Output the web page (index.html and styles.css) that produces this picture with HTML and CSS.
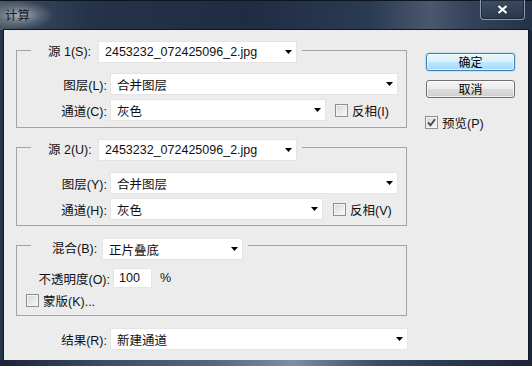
FILE: index.html
```html
<!DOCTYPE html>
<html lang="zh-CN">
<head>
<meta charset="utf-8">
<title>计算</title>
<link rel="stylesheet" href="styles.css">
</head>
<body>
<div class="window">
  <div class="titlebar">
    <span class="title">计算</span>
    <div class="close"><svg width="11" height="9" viewBox="0 0 11 9"><path d="M1.5 1 L9.5 8 M9.5 1 L1.5 8" stroke="#fff" stroke-width="2.2" fill="none"/></svg></div>
  </div>
  <div class="client">
    <div class="left">
      <fieldset class="group g1">
        <legend><div class="legend-in li1"><span class="llbl">源 1(S):</span><div class="combo w199"><span>2453232_072425096_2.jpg</span><svg class="arr" width="7" height="4" viewBox="0 0 7 4"><polygon points="0,0 7,0 3.5,4" fill="#000"/></svg></div></div></legend>
        <div class="row"><span class="lbl">图层(L):</span><div class="combo w288"><span>合并图层</span><svg class="arr" width="7" height="4" viewBox="0 0 7 4"><polygon points="0,0 7,0 3.5,4" fill="#000"/></svg></div></div>
        <div class="row"><span class="lbl">通道(C):</span><div class="combo w216"><span>灰色</span><svg class="arr" width="7" height="4" viewBox="0 0 7 4"><polygon points="0,0 7,0 3.5,4" fill="#000"/></svg></div><span class="cb cb-inv"></span><span class="cbtext">反相(I)</span></div>
      </fieldset>
      <fieldset class="group g2">
        <legend><div class="legend-in li2"><span class="llbl">源 2(U):</span><div class="combo w199"><span>2453232_072425096_2.jpg</span><svg class="arr" width="7" height="4" viewBox="0 0 7 4"><polygon points="0,0 7,0 3.5,4" fill="#000"/></svg></div></div></legend>
        <div class="row"><span class="lbl">图层(Y):</span><div class="combo w288"><span>合并图层</span><svg class="arr" width="7" height="4" viewBox="0 0 7 4"><polygon points="0,0 7,0 3.5,4" fill="#000"/></svg></div></div>
        <div class="row"><span class="lbl">通道(H):</span><div class="combo w213"><span>灰色</span><svg class="arr" width="7" height="4" viewBox="0 0 7 4"><polygon points="0,0 7,0 3.5,4" fill="#000"/></svg></div><span class="cb cb-inv2"></span><span class="cbtext">反相(V)</span></div>
      </fieldset>
      <fieldset class="group g3">
        <legend><div class="legend-in li3"><span class="llbl l3">混合(B):</span><div class="combo w141"><span>正片叠底</span><svg class="arr" width="7" height="4" viewBox="0 0 7 4"><polygon points="0,0 7,0 3.5,4" fill="#000"/></svg></div></div></legend>
        <div class="row op"><span class="lbl olbl">不透明度(O):</span><div class="field">100</div><span class="pct">%</span></div>
        <div class="row mask"><span class="cb"></span><span class="cbtext">蒙版(K)...</span></div>
      </fieldset>
      <div class="row result"><span class="lbl rlbl">结果(R):</span><div class="combo w298"><span>新建通道</span><svg class="arr" width="7" height="4" viewBox="0 0 7 4"><polygon points="0,0 7,0 3.5,4" fill="#000"/></svg></div></div>
    </div>
    <div class="right">
      <div class="btn btn-default">确定</div>
      <div class="btn">取消</div>
      <div class="row preview"><span class="cb checked"><svg width="11" height="11" viewBox="0 0 11 11"><path d="M2 5.5 L4.5 8.2 L9 2.2" stroke="#3b4f68" stroke-width="1.9" fill="none"/></svg></span><span class="cbtext">预览(P)</span></div>
    </div>
  </div>
  <div class="bottomstrip"></div>
</div>
</body>
</html>
```

FILE: styles.css
```css
html, body {
  margin: 0;
  padding: 0;
}
body {
  width: 532px;
  height: 366px;
  overflow: hidden;
  background: #1c2839;
  font-family: "Liberation Sans", "Noto Sans CJK SC", sans-serif;
  font-size: 12.5px;
  color: #111;
}
.window {
  width: 532px;
  height: 366px;
  display: flex;
  flex-direction: column;
  background: linear-gradient(to right, #263447 0, #1d2a3d 40%, #22324a 75%, #1c283a 100%);
}
.titlebar {
  height: 30px;
  flex: none;
  display: flex;
  align-items: flex-start;
  background:
    radial-gradient(ellipse 34px 14px at 20px 15px, rgba(200,205,212,0.75), rgba(150,160,172,0.35) 60%, rgba(0,0,0,0) 100%),
    linear-gradient(to right, #4d5966 0, #34445a 35px, #243348 90px, #1f2d43 250px, #2b3b53 370px, #4a586d 430px, #34435a 470px, #24324a 532px);
  box-shadow: inset 0 1px 0 #0e1520;
}
.title {
  margin: 5px 0 0 5px;
  font-family: "Noto Sans CJK SC", sans-serif;
  font-size: 12.5px;
  line-height: 20px;
  color: #141a22;
}
.close {
  margin-left: auto;
  margin-right: 7px;
  width: 43px;
  height: 19px;
  border: 1px solid rgba(170,182,198,0.75);
  border-top: none;
  border-radius: 0 0 4px 4px;
  display: flex;
  align-items: center;
  justify-content: center;
  background: linear-gradient(to bottom, rgba(80,95,115,0.5), rgba(40,52,70,0.4));
  box-shadow: inset 0 0 0 1px rgba(20,30,45,0.6);
}
.client {
  flex: none;
  height: 330px;
  margin: 0 4px;
  background: #ececec;
  display: flex;
  box-shadow: 0 0 0 1px #0f1722;
}
.left {
  width: 391px;
  padding: 11px 0 0 12px;
  display: flex;
  flex-direction: column;
}
.group {
  margin: 0;
  border: 1px solid #a3a3a3;
  min-width: 0;
}
.g1 { padding: 14px 0 6px 0; }
.g2 { margin-top: 11px; padding: 16px 0 5px 0; }
.g3 { margin-top: 12px; padding: 16px 0 7px 0; }
legend {
  margin: 0 0 0 14px;
  padding: 0 5px 0 0;
}
.legend-in {
  display: flex;
  align-items: flex-start;
  width: 266px;
  overflow: visible;
}
.li1 { height: 18px; }
.li2 { height: 17px; }
.li3 { height: 14px; width: 212px; }
.llbl {
  flex: none;
  padding-left: 17px;
  line-height: 22px;
  white-space: nowrap;
}
.llbl.l3 { padding-left: 21px; }
.legend-in .combo {
  margin-left: auto;
  flex: none;
}
.row {
  display: flex;
  align-items: center;
  height: 22px;
}
.row + .row { margin-top: 4px; }
.lbl {
  flex: none;
  width: 90px;
  margin-right: 3px;
  text-align: right;
  white-space: nowrap;
}
.combo {
  box-sizing: border-box;
  flex: none;
  height: 22px;
  background: #fff;
  border: 1px solid #e4e4e4;
  display: flex;
  align-items: center;
  padding: 0 4px 0 6px;
  white-space: nowrap;
}
.combo span { flex: 1; }
.arr { flex: none; }
.w199 { width: 199px; }
.w288 { width: 288px; }
.w216 { width: 216px; }
.w213 { width: 213px; }
.w141 { width: 141px; }
.w298 { width: 298px; }
.cb {
  box-sizing: border-box;
  width: 13px;
  height: 13px;
  flex: none;
  border: 1px solid #8e8f8f;
  background: linear-gradient(135deg, #d6d6d6 0%, #ececec 60%, #fafafa 100%);
  box-shadow: inset 0 0 0 1px #f4f4f4;
  display: flex;
  align-items: center;
  justify-content: center;
}
.cb-inv { margin-left: 9px; }
.cb-inv2 { margin-left: 10px; }
.cbtext {
  margin-left: 4px;
  white-space: nowrap;
}
.op { height: 20px; }
.g3 .row + .row { margin-top: 5px; }
.olbl { width: 93px; }
.field {
  box-sizing: border-box;
  width: 39px;
  height: 20px;
  background: #fff;
  border: 1px solid #e4e4e4;
  padding-left: 5px;
  line-height: 18px;
}
.pct { margin-left: 8px; }
.mask {
  height: 15px;
  padding-left: 9px;
}
.result {
  margin-top: 12px;
}
.rlbl { width: 91px; }
.right {
  margin-left: 19px;
  padding-top: 23px;
  display: flex;
  flex-direction: column;
  width: 89px;
}
.btn {
  box-sizing: border-box;
  width: 89px;
  height: 18px;
  border: 1px solid #707070;
  border-radius: 3px;
  background: linear-gradient(to bottom, #f4f4f4 0%, #ebebeb 48%, #dcdcdc 52%, #cfcfcf 100%);
  box-shadow: inset 0 0 0 1px rgba(255,255,255,0.7);
  text-align: center;
  font-family: "Noto Sans CJK SC", sans-serif;
  font-size: 12px;
  line-height: 16px;
  color: #000;
}
.btn + .btn { margin-top: 9px; }
.btn-default {
  border-color: #3c7fb1;
  background: linear-gradient(to bottom, #eaf6fd 0%, #d9f0fc 48%, #bee6fd 52%, #a7d9f5 100%);
  box-shadow: inset 0 0 0 1px rgba(255,255,255,0.6), 0 0 2px #6ac4ee;
}
.preview {
  margin-top: 18px;
  height: 13px;
  margin-left: -1px;
}
.bottomstrip {
  flex: 1;
  background: linear-gradient(to right, #1a2536 0, #3e4d63 20%, #55667e 40%, #7e8ea4 55%, #3f4f66 70%, #2a384c 85%, #1a2536 100%);
}
```
